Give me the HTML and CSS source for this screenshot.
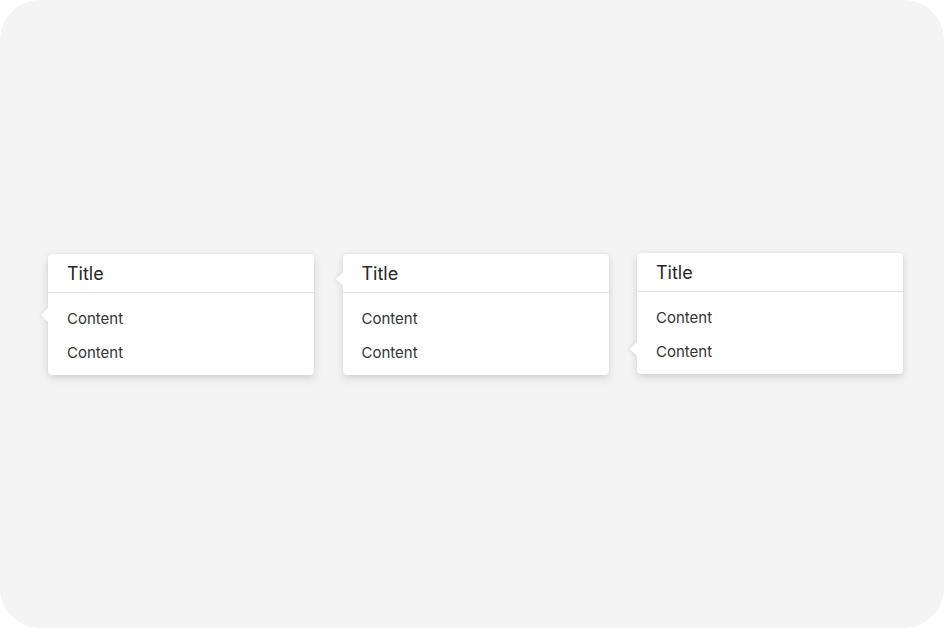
FILE: index.html
```html
<!DOCTYPE html>
<html lang="en">
<head>
<meta charset="utf-8">
<title>Popovers</title>
<link rel="stylesheet" href="styles.css">
</head>
<body>
<div class="frame">
  <div class="row">
    <div class="popover arrow-a">
      <div class="pop-title">Title</div>
      <div class="pop-body">
        <div class="pop-item">Content</div>
        <div class="pop-item">Content</div>
      </div>
    </div>
    <div class="popover arrow-b">
      <div class="pop-title">Title</div>
      <div class="pop-body">
        <div class="pop-item">Content</div>
        <div class="pop-item">Content</div>
      </div>
    </div>
    <div class="popover arrow-c shift-up">
      <div class="pop-title">Title</div>
      <div class="pop-body">
        <div class="pop-item">Content</div>
        <div class="pop-item">Content</div>
      </div>
    </div>
  </div>
</div>
</body>
</html>
```
FILE: styles.css
```css
html, body {
  margin: 0;
  padding: 0;
  background: #ffffff;
}
body {
  font-family: Inter, "Noto Sans", "Liberation Sans", sans-serif;
  color: #2b2b2b;
}
.frame {
  width: 944px;
  height: 628px;
  background: #f4f4f4;
  border-radius: 40px;
  display: flex;
  align-items: center;
  box-sizing: border-box;
  padding-left: 48px;
}
.row {
  display: flex;
  align-items: flex-start;
  gap: 28.5px;
  margin-top: 1px;
}
.popover {
  position: relative;
  width: 266px;
  background: #ffffff;
  border-radius: 4px;
  box-shadow: 0 3px 9px rgba(0, 0, 0, 0.15), 0 0 2px rgba(0, 0, 0, 0.05);
}
.shift-up {
  margin-top: -1px;
}
.popover::before {
  content: "";
  position: absolute;
  left: -5px;
  width: 10px;
  height: 10px;
  background: #ffffff;
  transform: rotate(45deg);
  box-shadow: -2px 2px 4px rgba(0, 0, 0, 0.05);
}
.arrow-a::before { top: 56px; }
.arrow-b::before { top: 20px; }
.arrow-c::before { top: 91px; }
.pop-title {
  position: relative;
  height: 38px;
  line-height: 40px;
  padding-left: 19px;
  font-size: 18px;
  color: #262626;
  border-bottom: 1px solid #e3e3e3;
}
.pop-body {
  position: relative;
  padding: 9px 0 5px;
}
.pop-item {
  height: 34px;
  line-height: 34px;
  padding-left: 19px;
  font-size: 15px;
  color: #333333;
}
```
